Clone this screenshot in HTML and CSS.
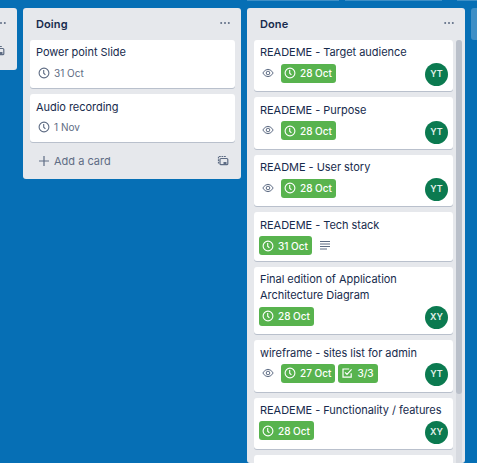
FILE: index.html
```html
<!DOCTYPE html>
<html lang="en">
<head>
<meta charset="utf-8">
<title>Board</title>
<link rel="stylesheet" href="styles.css">
</head>
<body>
<svg class="defs" width="0" height="0">
  <symbol id="clock" viewBox="0 0 12 12"><circle cx="6" cy="6" r="4.9" fill="none" stroke="currentColor" stroke-width="1.1"/><path d="M5.7 3v3.2l1.7 1.7" fill="none" stroke="currentColor" stroke-width="1.1"/></symbol>
  <symbol id="eye" viewBox="0 0 12 12"><path d="M.8 6Q3 2.3 6 2.3T11.2 6Q9 9.7 6 9.7T.8 6Z" fill="none" stroke="currentColor"/><circle cx="6" cy="6" r="1.8" fill="none" stroke="currentColor"/></symbol>
  <symbol id="template" viewBox="0 0 12 12"><path d="M1.5 8.5V1.5H9" fill="none" stroke="currentColor" stroke-width="1.2" stroke-dasharray="1.8 .7"/><rect x="3" y="3.5" width="7.8" height="6.2" rx="1" fill="none" stroke="currentColor" stroke-width="1.2"/><path d="M6.5 7h3v2h-3z" fill="currentColor"/></symbol>
  <symbol id="lines" viewBox="0 0 12 12"><path d="M1 2.5h10M1 5h10M1 7.5h10M1 10h7" stroke="currentColor" stroke-width="1"/></symbol>
  <symbol id="check" viewBox="0 0 12 12"><path d="M8.2 2H2v8.2h8.2V6.2M4 5.3l2 2.1 4.6-5" fill="none" stroke="currentColor" stroke-width="1.2"/></symbol>
  <symbol id="dots" viewBox="0 0 12 12"><circle cx="2.2" cy="6" r="1" fill="currentColor"/><circle cx="6" cy="6" r="1" fill="currentColor"/><circle cx="9.8" cy="6" r="1" fill="currentColor"/></symbol>
  <symbol id="plus" viewBox="0 0 12 12"><path d="M6 1v10M1 6h10" stroke="currentColor" stroke-width="1.2"/></symbol>
</svg>
<div class="toolbar"><i></i><i></i><i></i></div>
<main class="board">
  <section class="list list-edge">
    <svg class="icon"><use href="#dots"/></svg>
    <svg class="icon"><use href="#template"/></svg>
  </section>
  <section class="list">
    <header><h2>Doing</h2><svg class="icon"><use href="#dots"/></svg></header>
    <div class="cards doing">
      <article class="card short"><h3>Power point Slide</h3><div class="badges"><span class="badge"><svg class="icon"><use href="#clock"/></svg>31 Oct</span></div></article>
      <article class="card short"><h3>Audio recording</h3><div class="badges"><span class="badge"><svg class="icon"><use href="#clock"/></svg>1 Nov</span></div></article>
    </div>
    <footer><svg class="icon"><use href="#plus"/></svg><span>Add a card</span><svg class="icon"><use href="#template"/></svg></footer>
  </section>
  <section class="list list-done">
    <header><h2>Done</h2><svg class="icon"><use href="#dots"/></svg></header>
    <div class="scroller">
      <div class="cards">
        <article class="card"><h3>READEME - Target audience</h3><div class="badges"><svg class="icon eye"><use href="#eye"/></svg><span class="badge done"><svg class="icon"><use href="#clock"/></svg>28 Oct</span><b class="member">YT</b></div></article>
        <article class="card"><h3>READEME - Purpose</h3><div class="badges"><svg class="icon eye"><use href="#eye"/></svg><span class="badge done"><svg class="icon"><use href="#clock"/></svg>28 Oct</span><b class="member">YT</b></div></article>
        <article class="card"><h3>README - User story</h3><div class="badges"><svg class="icon eye"><use href="#eye"/></svg><span class="badge done"><svg class="icon"><use href="#clock"/></svg>28 Oct</span><b class="member">YT</b></div></article>
        <article class="card short"><h3>READEME - Tech stack</h3><div class="badges"><span class="badge done"><svg class="icon"><use href="#clock"/></svg>31 Oct</span><svg class="icon lines"><use href="#lines"/></svg></div></article>
        <article class="card tall"><h3>Final edition of Application<br>Architecture Diagram</h3><div class="badges"><span class="badge done"><svg class="icon"><use href="#clock"/></svg>28 Oct</span><b class="member">XY</b></div></article>
        <article class="card"><h3>wireframe - sites list for admin</h3><div class="badges"><svg class="icon eye"><use href="#eye"/></svg><span class="badge done"><svg class="icon"><use href="#clock"/></svg>27 Oct</span><span class="badge done"><svg class="icon"><use href="#check"/></svg>3/3</span><b class="member">YT</b></div></article>
        <article class="card"><h3>READEME - Functionality / features</h3><div class="badges"><span class="badge done"><svg class="icon"><use href="#clock"/></svg>28 Oct</span><b class="member">XY</b></div></article>
        <article class="card"></article>
      </div>
      <div class="track"><div class="thumb"></div></div>
    </div>
  </section>
  <section class="next-list"></section>
</main>
</body>
</html>
```
FILE: styles.css
```css
* { box-sizing: border-box; }
body { margin: 0; height: 463px; overflow: hidden; background: #066fb5; color: #172b4d; font: 11px/16px Inter, "Liberation Sans", sans-serif; }
.defs { position: absolute; }
.toolbar { height: 8px; padding-left: 247px; display: flex; }
.toolbar i { height: 1px; width: 92px; background: #3d8fc6; }
.toolbar i:nth-child(2) { width: 97px; margin-left: 6px; }
.toolbar i:nth-child(3) { width: 20px; margin-left: 15px; }
.board { display: flex; align-items: flex-start; gap: 6px; height: 455px; overflow: hidden; }
.icon { width: 12px; height: 12px; flex: none; color: #5e6c84; display: block; }
.list { width: 218px; flex: none; background: #e6e8ec; border-radius: 3px; }
.list-edge { width: 17px; height: 62px; border-radius: 0 3px 3px 0; padding-top: 9px; overflow: hidden; }
.list-edge .icon { margin-left: -5px; }
.list-edge .icon + .icon { margin: 16px 0 0 -7px; }
.list-done { height: 455px; }
header { height: 31.9px; padding: 0 10px 0 13px; display: flex; align-items: center; justify-content: space-between; }
header .icon { margin-top: -2px; }
h2 { margin: 0; font-size: 11px; line-height: 16px; font-weight: 600; letter-spacing: .1px; }
h3 { margin: 0; font-size: 11px; line-height: 16px; font-weight: 400; letter-spacing: -.04px; white-space: nowrap; }
.cards { display: flex; flex-direction: column; gap: 6px; width: 199px; }
.doing { width: 205px; margin-left: 7px; }
.card { height: 51.5px; flex: none; background: #fff; border-radius: 3px; box-shadow: 0 1px 0 #b9c0cc; padding: 4.6px 5px 0 6px; }
.card.short { height: 48.5px; }
.doing .card { height: 48.2px; }
.doing .card + .card { padding-top: 5px; }
.doing .card + .card .badges { margin-top: 2.4px; }
.card.tall { height: 67.2px; }
.badges { display: flex; height: 23px; align-items: flex-start; margin: 3.2px 0 0 -1px; }
.badge { height: 19px; display: flex; align-items: center; gap: 4px; padding: 0 4px 0 3px; border-radius: 3px; font-size: 10px; color: #5e6c84; white-space: nowrap; }
.badge.done { background: #58b34e; color: #fff; font-weight: 500; }
.badge.done .icon { color: #fff; }
.badge + .badge { margin-left: 3px; }
.eye { margin: 3px 7px 0 3px; }
.lines { margin: 3px 0 0 7px; }
.member { width: 23px; height: 23px; margin: -.5px 0 0 auto; border-radius: 50%; background: #0b7a50; color: #e5f2ec; font-size: 9px; line-height: 22px; font-weight: 600; text-align: center; }
footer { height: 36.7px; padding: 1px 12px 0 15px; display: flex; align-items: center; gap: 4px; color: #5e6c84; }
footer .icon:last-child { margin-left: auto; }
.scroller { display: flex; padding-left: 7px; height: 423px; overflow: hidden; }
.track { width: 6px; height: 423px; margin-left: 3px; background: #d7dae0; border-radius: 3px 3px 0 0; }
.thumb { height: 354px; background: #bac0ca; border-radius: 3px; }
.next-list { width: 20px; height: 32px; flex: none; border-radius: 3px 0 0 3px; background: #3e8fc6; }
```
